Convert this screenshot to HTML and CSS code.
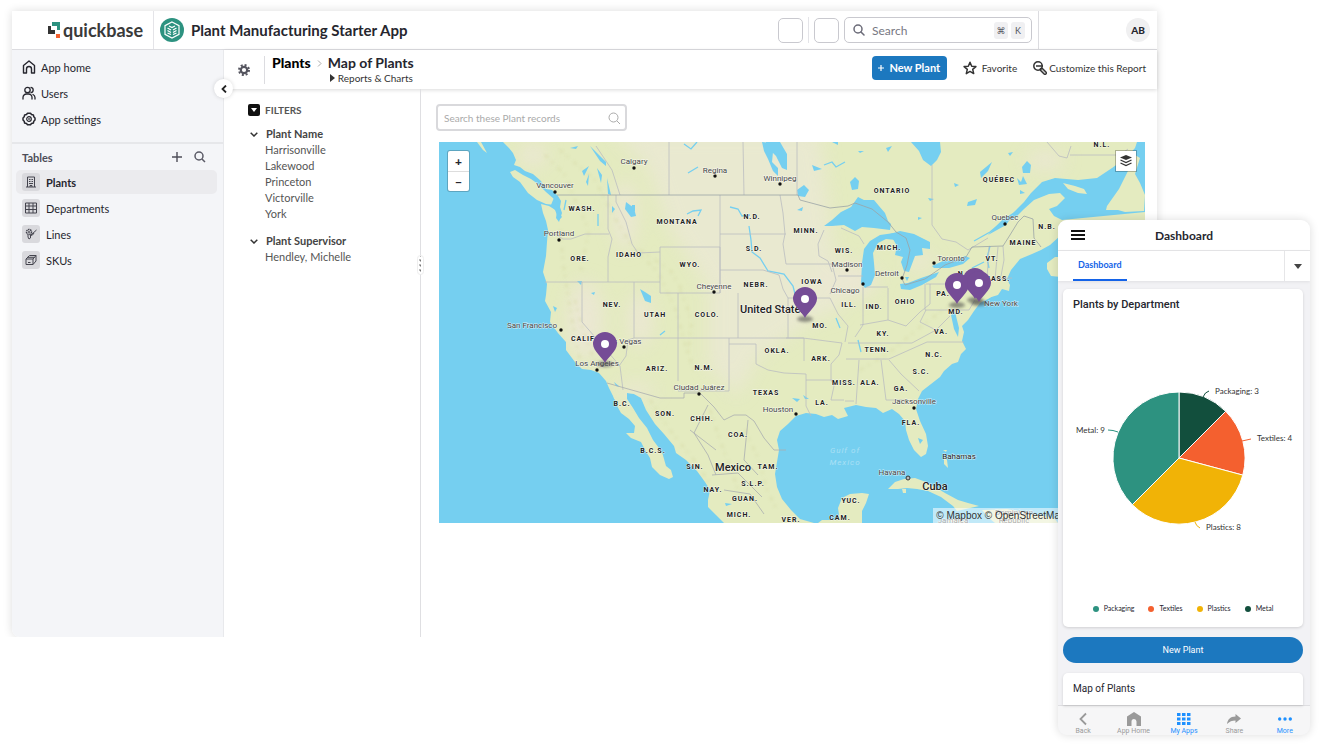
FILE: index.html
```html
<!DOCTYPE html>
<html lang="en">
<head>
    <meta charset="UTF-8">
    <meta name="viewport" content="width=device-width, initial-scale=1.0">
    <title>Plant Manufacturing Starter App</title>
    <link rel="stylesheet" href="styles.css">
</head>
<body>
    <div class="app">
        <!-- Top bar -->
        <header class="topbar">
            <div class="brand">
                <svg width="12" height="16" viewBox="0 0 12 16">
                    <path fill="#2d9280" d="M4 0h8v8H9V4H4z"/>
                    <path fill="#333" d="M0 4h3v4h4v4H0z"/>
                    <path fill="#f4602f" d="M8 12h4v4H8z"/>
                </svg>
                <span>quickbase</span>
            </div>
            <div class="app-name">
                <svg width="24" height="24" viewBox="0 0 24 24" fill="none" stroke="#fff">
                    <circle cx="12" cy="12" r="12" fill="#2d9280" stroke="none"/>
                    <path d="M12 4l7 3.700v8.600L12 20l-7-3.700V7.700z" stroke-width="1.200"/>
                    <path d="M7.500 10l3.500 2M7.500 12.500l3.500 2M7.500 15l3.500 1.500M16.500 10L13 12M16.500 12.500l-3.500 2M16.500 15L13 16.500M9 8l3 1.500L15 8" stroke-width="1.300"/>
                </svg>
                <h1>Plant Manufacturing Starter App</h1>
            </div>
            <div class="top-tools">
                <button class="square" aria-label="Add"></button>
                <span class="tool-line"></span>
                <button class="square" aria-label="Help"></button>
                <div class="search">
                    <svg width="12" height="12" viewBox="0 0 12 12" fill="none" stroke="#6b6b78" stroke-width="1.500" stroke-linecap="round"><circle cx="5" cy="5" r="4"/><path d="M8 8l3 3"/></svg>
                    <input type="text" placeholder="Search" aria-label="Search">
                    <kbd>⌘</kbd><kbd>K</kbd>
                </div>
            </div>
            <div class="account"><button class="avatar">AB</button></div>
        </header>

        <div class="columns">
            <!-- Sidebar -->
            <aside class="sidebar">
                <nav class="main-nav">
                    <a href="#"><svg width="14" height="14" viewBox="0 0 14 14" fill="none" stroke="#26262e" stroke-width="1.400" stroke-linejoin="round"><path d="M1.500 5.500L7 1l5.500 4.500V13H9.500V9a2.500 2.500 0 0 0-5 0v4h-3z"/></svg>App home</a>
                    <a href="#"><svg width="14" height="14" viewBox="0 0 14 14" fill="none" stroke="#26262e" stroke-width="1.300" stroke-linecap="round"><circle cx="5.500" cy="4" r="2.700"/><path d="M1 13v-1.500A3.500 3.500 0 0 1 4.500 8h2A3.500 3.500 0 0 1 10 11.500V13M9 1.300a2.700 2.700 0 0 1 0 5.300M11 8.500a3.500 3.500 0 0 1 2 3V13"/></svg>Users</a>
                    <a href="#"><svg width="14" height="14" viewBox="0 0 14 14" fill="none" stroke="#26262e" stroke-linejoin="round"><path d="M5.500 1.200h3l1 1.300 1.900.4.400 1.900 1.200 1.200v2l-1.200 1.200-.4 1.900-1.900.4-1 1.300h-3l-1-1.300-1.900-.4-.4-1.900L1 8V6l1.200-1.200.4-1.900 1.900-.4z" stroke-width="1.500"/><circle cx="7" cy="7" r="2.300" stroke-width="1.200"/><circle cx="7" cy="7" r=".5"/></svg>App settings</a>
                </nav>
                <div class="tables-head">
                    <h2>Tables</h2>
                    <button aria-label="Add table"><svg width="10" height="10" viewBox="0 0 10 10" stroke="#4d4d58" stroke-width="1.400"><path d="M5 0v10M0 5h10"/></svg></button>
                    <button aria-label="Find table"><svg width="12" height="12" viewBox="0 0 12 12" fill="none" stroke="#5a5a66" stroke-width="1.500"><circle cx="5" cy="5" r="4"/><path d="M8 8l3 3"/></svg></button>
                </div>
                <nav class="table-nav">
                    <a href="#" class="active"><i><svg width="12" height="12" viewBox="0 0 12 12" fill="none" stroke="#44444e"><path d="M2.500 11V1h7v10M1 11h10M4 3.500h1.500M6.500 3.500H8M4 5.500h1.500M6.500 5.500H8M4 7.500h4M5 11V9.500h2V11"/></svg></i>Plants</a>
                    <a href="#"><i><svg width="12" height="12" viewBox="0 0 12 12" fill="none" stroke="#44444e"><path d="M.5 1h11v10H.5zM.5 4h11M.5 7.500h11M4 1v10M8 1v10"/></svg></i>Departments</a>
                    <a href="#"><i><svg width="12" height="12" viewBox="0 0 12 12" fill="none" stroke="#44444e"><circle cx="4" cy="4" r="2.500" stroke-width="1.500" stroke-dasharray="1.500 .6"/><circle cx="4" cy="4" r=".6"/><path d="M3 7v2l1 2 1.500-1V7M6 7l5.500-5M5.500 7.500l2-.5L9 5"/></svg></i>Lines</a>
                    <a href="#"><i><svg width="12" height="12" viewBox="0 0 12 12" fill="none" stroke="#44444e" stroke-linejoin="round"><path d="M1 5l3.500-3.500H11L8 5zM1 5v5.500h7V5M8 10.500L11 7V1.500M2.500 3.300h7M3 8.500h2.500"/></svg></i>SKUs</a>
                </nav>
                <button class="collapse" aria-label="Collapse sidebar"><svg width="6" height="8" viewBox="0 0 6 8" fill="none" stroke="#222" stroke-width="1.800"><path d="M5 .5L1.500 4 5 7.500"/></svg></button>
            </aside>

            <div class="content">
                <!-- Report header -->
                <div class="report-head">
                    <button class="gear" aria-label="Report settings"><svg width="12" height="12" viewBox="0 0 12 12" fill="none" stroke="#55555f"><circle cx="6" cy="6" r="3.200" stroke-width="2.200"/><circle cx="6" cy="6" r="5" stroke-width="2" stroke-dasharray="2 1.927"/></svg></button>
                    <div class="crumbs">
                        <a href="#" class="crumb-root">Plants</a>
                        <svg width="5" height="7" viewBox="0 0 5 7" fill="none" stroke="#aaa"><path d="M1 .5l3 3-3 3"/></svg>
                        <div>
                            <h2>Map of Plants</h2>
                            <a href="#" class="reports"><svg width="5" height="8" viewBox="0 0 5 8"><path fill="#333" d="M0 0l5 4-5 4z"/></svg>Reports &amp; Charts</a>
                        </div>
                    </div>
                    <div class="actions">
                        <button class="new-plant"><svg width="6" height="6" viewBox="0 0 6 6" stroke="#fff" stroke-width="1.200"><path d="M3 0v6M0 3h6"/></svg>New Plant</button>
                        <a href="#" class="favorite"><svg width="14" height="14" viewBox="0 0 14 14" fill="none" stroke="#333" stroke-width="1.500" stroke-linejoin="round"><path d="M7 1.300l1.700 3.900 4.200.4-3.200 2.800 1 4.200L7 10.400l-3.700 2.200 1-4.200L1.100 5.600l4.200-.4z"/></svg>Favorite</a>
                        <a href="#" class="customize"><svg width="14" height="14" viewBox="0 0 14 14" fill="none" stroke="#333"><circle cx="5" cy="5" r="4.200" stroke-width="1.500"/><path d="M3 5h7" stroke-width="1.500"/><path d="M8.500 8.500l3.500 3.500" stroke-width="4" stroke-linecap="round"/><path d="M9 9l3 3" stroke="#ccc" stroke-width="1.300" stroke-linecap="round"/></svg>Customize this Report</a>
                    </div>
                </div>

                <div class="report-body">
                    <!-- Filters -->
                    <section class="filters">
                        <h3 class="filters-title"><svg width="12" height="12" viewBox="0 0 12 12"><rect width="12" height="12" rx="2" fill="#111"/><path fill="#fff" d="M3 4h6L6 8z"/></svg>FILTERS</h3>
                        <div class="filter-group">
                            <h4><svg width="8" height="5" viewBox="0 0 8 5" fill="none" stroke="#333" stroke-width="1.500"><path d="M.7.700L4 4 7.300.700"/></svg>Plant Name</h4>
                            <a href="#">Harrisonville</a>
                            <a href="#">Lakewood</a>
                            <a href="#">Princeton</a>
                            <a href="#">Victorville</a>
                            <a href="#">York</a>
                        </div>
                        <div class="filter-group">
                            <h4><svg width="8" height="5" viewBox="0 0 8 5" fill="none" stroke="#333" stroke-width="1.500"><path d="M.7.700L4 4 7.300.700"/></svg>Plant Supervisor</h4>
                            <a href="#">Hendley, Michelle</a>
                        </div>
                        <span class="grip"></span>
                    </section>

                    <main class="report">
                        <div class="record-search">
                            <input type="text" placeholder="Search these Plant records" aria-label="Search these Plant records">
                            <svg width="12" height="12" viewBox="0 0 12 12" fill="none" stroke="#aaa"><circle cx="5.500" cy="5.500" r="4.500"/><path d="M9 9l3 3"/></svg>
                        </div>
                        <div class="map">
                            <svg class="map-canvas" viewBox="439 142 706 381">
                                <defs>
                                    <filter id="soft" x="-50%" y="-50%" width="200%" height="200%"><feGaussianBlur stdDeviation="9"/></filter>
                                    <filter id="shade" x="-50%" y="-50%" width="200%" height="200%"><feGaussianBlur stdDeviation="1.500"/></filter>
                                    <g id="pin">
                                        <ellipse cy="1" rx="8" ry="3" fill="#444" opacity=".55" filter="url(#shade)"/>
                                        <path fill="#754c96" d="M0 0C-2-5-12-12-12-19a12 12 0 0 1 24 0C12-12 2-5 0 0z"/>
                                        <circle cy="-19" r="4" fill="#fff"/>
                                    </g>
                                    <path id="mainland" d="M503 142L509 148 513 153 516 160 514 165 520 167 525 171 533 174 541 181 546 189 552 190 558 196 561 201 560 207 562 213 559 222 556 218 557 211 549 206 541 204 543 213 546 221 548 230 547 242 546 256 543 272 547 284 546 295 545 301 551 312 550 322 558 333 566 342 566 350 575 362 582 369 591 370 599 373 606 381 609 388 613 396 616 404 621 413 629 419 635 426 634 433 626 433 631 438 641 442 645 450 650 458 652 467 660 475 669 479 673 477 671 470 666 466 662 452 653 440 647 428 639 418 633 408 627 399 627 393 634 394 641 398 646 410 655 424 664 434 674 446 676 453 686 460 697 471 705 482 710 490 708 500 708 507 716 515 724 523L814 523 800 519 791 510 782 499 777 487 775 474 777 462 779 450 777 440 780 431 788 424 796 416 806 413 816 414 824 417 832 415 838 419 848 416 844 408 856 405 866 407 876 408 883 413 892 409 899 414 905 421 906 430 909 440 914 450 921 457 926 454 928 446 926 434 920 421 916 409 918 399 922 391 931 384 940 377 944 371 952 364 958 362 961 354 966 349 962 341 964 332 962 326 968 320 974 311 980 303 988 298 998 295 1002 289 1009 291 1010 285 1007 279 1011 270 1020 259 1032 254 1041 250 1050 245 1060 236 1070 232 1145 226 1145 212 1062 220 1054 216 1049 209 1057 206 1065 198 1060 193 1049 194 1034 200 1024 209 1015 218 1005 222 1015 211 1024 202 1031 193 1042 182 1055 178 1078 180 1097 178 1112 168 1126 158 1135 148 1137 142z"/>
                                    <path id="superior" d="M824 226l8-6 9-8 10-5 7-10 6 3 10 0 5 6 6 7 3 8 3 3-1 6-16-2-12-1-7 4-11-6-12 1z"/>
                                    <clipPath id="land-clip"><use href="#mainland"/></clipPath>
                                </defs>
                                <rect x="439" y="142" width="706" height="381" fill="#75cff0"/>
                                <!-- Land -->
                                <g fill="#e4ebc0">
                                    <use href="#mainland"/>
                                    <path d="M477 142h4l6 11-4-3zM510 172l5-2 8 5 8 4 7 5 8 8 8 7 1 6-9-1-9-4-9-7-8-11-7-5zM1063 183l12 3 9 3 3 5-9-1-10-4zM1145 195l-5-12-5-9 5-16-5-3-8 18-8 16-12 17-1 4 12 0 7 2 19-1zM1047 263l8-6 6 0v20l-10-1-4-7z"/>
                                    <path d="M976 302l10-5 10-3-8 5-9 4zM888 489l7-7 9-3 11-1 11 4 9 5 10 6 13 7 10 3 11 3-22 5-4-5-12-9-13-6-11-2-10-1-9 1zM818 523l4-3 15 0 2-5-1-7 4-10 8-4 12-1 7 1-3 9-4 8 0 12zM944 456l3 4 1 8-4-4zM943 450l4 0-1 2zM902 489l4 0 0 4-3 0zM945 522l8-3 14 3 1 1zM995 523l-5-4-8-9 25-1 27 5 20 4 4 5z"/>
                                </g>
                                <!-- Drier and higher ground -->
                                <g clip-path="url(#land-clip)">
                                    <g filter="url(#soft)" fill="#ede6d9" opacity=".75">
                                        <path d="M610 132h210l12 100 8 80-22 5-60 40-20 40-30-30 0-80-40-60-20-60z" fill="#ebe8d6"/>
                                        <ellipse cx="533" cy="155" rx="14" ry="12"/>
                                        <ellipse cx="625" cy="215" rx="12" ry="35"/>
                                        <ellipse cx="585" cy="320" rx="18" ry="40"/>
                                        <ellipse cx="640" cy="320" rx="12" ry="28"/>
                                        <ellipse cx="636" cy="390" rx="20" ry="7"/>
                                        <ellipse cx="848" cy="280" rx="30" ry="18"/>
                                        <ellipse cx="1045" cy="160" rx="20" ry="9"/>
                                        <ellipse cx="920" cy="262" rx="14" ry="8"/>
                                    </g>
                                    <g fill="none" stroke="#d3d6a0" stroke-width="2" stroke-dasharray="4 5 2 7" opacity=".55" filter="url(#shade)">
                                        <path d="M545 155l20 20 12 30 12 25-8 40M560 150l35 30 20 38 18 30 25 24 18 38 12 45M575 300l8 30 15 40M560 230l4 40 8 50 8 40M680 290l12 30-4 34 8 20M640 250l30 20 12 20M650 400l20 30 24 30 16 24M745 430l14 30 8 30 10 20M710 410l10 30 22 60M860 370l30-18 24-20 34-26"/>
                                    </g>
                                </g>
                                <!-- Lakes and rivers -->
                                <g fill="#75cff0">
                                    <use href="#superior"/>
                                    <path d="M861 283l1-20 2-14 6-8 10-6 14-2 8 3-6 4-10-1-8 4-5 10 1 10 1 12-4 10-6 3z"/>
                                    <path d="M890 234l10-3 14 3 10 5 6 3 0 7-8-1 1 7-8 1-3 8-3 8-5-1-3-9 2-5-8-2 2-9z"/>
                                    <path d="M900 284l8-1 13-5 12-4 6-2-3 5-14 8-12 5-9-1zM932 266l11-5 14-1 8-4 5 2-7 6-14 4-15 0zM905 277l4 0-2 4zM911 142l8 9 4 9 8 6 6-6 4-8-1-10z"/>
                                    <path d="M762 142l8 1 3 9-1 10 6 6 0 8-5-5-5-12-4-8zM766 142h14l7 12 0 16-5-2-6-12-8-8zM797 190l7-5 5 5-4 7-7-1zM850 182l5-5 4 4-1 8-6 1zM797 210l6-3-1 4zM1022 167l5-6 4 4-1 8-7 0zM980 172l12-10-4 9-7 7zM1017 178l4 4 2-6 4 8-8 1zM968 202l9-3-2 6-8 1zM1002 220l14-9-10 14-18 10zM812 165l10 4-8 2zM832 142h6v3z"/>
                                    <path d="M626 202l8 6 2 8-5 1-6-8zM640 289l5 3 6 4 0 7-6-2zM612 206l3 3-3 4zM632 205l3 0v6h-4zM577 281l5 0-1 4zM591 293l4-1-1 3zM553 306l4 2-2 4zM555 195l5 8-2 8 4 6-3 3-4-10-4-5zM613 398l4 4-3 0zM614 382l6 5-4-1zM792 398l8 1-3 3zM803 395l6 4-4 0zM918 438l5 2-3 4zM725 503l7 1-6 2zM951 315l4-3 4 16-1 9-4-8z"/>
                                    <path d="M590 146l16 16 0 4-6-5zM582 171l7-5-5 10zM586 182l3-8-1 12zM597 168l5 7-1 8zM607 178l4 17-3-1zM570 148l8-2-2 3zM954 183l5 2-4 2zM928 198l6 1-4 2zM1020 190l5 3-5 1zM918 217l4 1-4 2zM1008 153l5-1-3 4zM858 151l6 0-4 2zM892 146l-4 6-2-4z"/>
                                </g>
                                <g fill="none" stroke="#75cff0">
                                    <path d="M730 207l8 2 4 7 8-1M749 226l2 14 1 12 8 6 8 13 16 3 9 12 3 12M687 214l6-3 8-1-3 6M688 173l5-3 5-3M684 144l7 5 6-7M598 214l0 12M566 200l-2 10M824 165l8-3 4 5 9-5M972 268l12-6M990 246l-3 12 2 10M1002 222l-12 10-16 9M836 318l4 10M858 340l3 12M660 335l5-4" stroke-width="1.300"/>
                                </g>
                                <!-- Borders -->
                                <g fill="none" stroke="#babdc0" stroke-width=".8">
                                    <path d="M616 195v7l10 20 6 22 6 9 22-1M608 195v34l4 10-4 18v25M555 234l8 5 8 0 14-5 24 0M545 282h115M660 247h60v46h-60zM582 282v40l38 44 3 24M634 282v56l-6 2-2 16-7 10M634 338h104M678 293v88M738 293v45M720 195v98M720 234h66M720 270h43l16 5 4 14 5 9v40M780 195l3 18 2 21-2 10 3 20 16 0h30l4 16-6 14M788 298h42l8 16 10 12-3 16M738 338h66v23M729 338v53H678M756 344v20l12 6 16 3 22 1v32l5 10M729 344h27M786 338h17l39 5M806 380h27M842 343l-3 12-8 9 0 16 3 6-3 14 13 0M848 343h64l24-13M846 359h43l38-17h37M859 360l-3 44M881 360l5 40h22M845 401h9M889 360l12 14 18 17M838 276h25M863 287v38l-8 12M888 288v32l18 6 14-14 10-8 0-20M866 287h22M860 325l28-5M824 230l-6 14 1 12 9 5 4 11M841 228l18 8 5 8M925 284v26h44l6-10M926 310l-6 12 16 8 14-14M926 284h35M1003 246l1 14-3 16M989 247l-2 32M994 279l18-1M998 247l-3 32M669 142v53M743 142l1 53M797 142v53M932 165v60l10 14 14 3 12 8 20-12M1047 142l12 14 8 2 4-12M1070 155h50l8-6M596 146l16 24 8 25"/>
                                    <path d="M607 383l53 15h24v-5h16l14 14 10 13 10-5 12 0 8 6 10 17 10 12 12 0M708 405l-14 28 14 22 8 20M748 420l-4 40 14 15M690 430l26 20M712 475l26-2 24 24M724 490l26 4 14 20" stroke="#a9adb0"/>
                                    <path d="M557 195H798L800 200 815 204 830 208 848 206 855 203 872 209 888 222 896 232 906 238 910 250 907 265 902 279 905 285 925 279 938 270 945 265 966 257 972 247 1003 246 1010 235 1018 222 1024 216 1033 219 1034 238 1041 247" stroke="#9aa3a6"/>
                                </g>
                                <!-- City dots -->
                                <g fill="#111">
                                    <circle cx="555" cy="192" r="1.700"/><circle cx="634" cy="168" r="1.700"/><circle cx="559" cy="240" r="1.700"/><circle cx="715" cy="176" r="1.700"/><circle cx="780" cy="184" r="1.700"/><circle cx="714" cy="292" r="1.700"/><circle cx="847" cy="270" r="1.700"/><circle cx="863" cy="284" r="1.700"/><circle cx="902" cy="278" r="1.700"/><circle cx="934" cy="263" r="1.700"/><circle cx="1005" cy="224" r="1.700"/><circle cx="561" cy="330" r="1.700"/><circle cx="624" cy="347" r="1.700"/><circle cx="597" cy="370" r="1.700"/><circle cx="699" cy="394" r="1.700"/><circle cx="796" cy="414" r="1.700"/><circle cx="914" cy="408" r="1.700"/><circle cx="908" cy="478" r="2" fill="#bbb" stroke="#333"/>
                                </g>
                                <g class="city">
                                    <text x="555" y="188">Vancouver</text><text x="634" y="164">Calgary</text><text x="559" y="236">Portland</text><text x="715" y="173">Regina</text><text x="780" y="181">Winnipeg</text><text x="714" y="289">Cheyenne</text><text x="847" y="267">Madison</text><text x="845" y="293">Chicago</text><text x="887" y="276">Detroit</text><text x="951" y="261">Toronto</text><text x="1005" y="220">Quebec</text><text x="532" y="328">San Francisco</text><text x="623" y="344">Las Vegas</text><text x="597" y="366">Los Angeles</text><text x="699" y="390">Ciudad Juárez</text><text x="778" y="412">Houston</text><text x="914" y="404">Jacksonville</text><text x="892" y="475">Havana</text><text x="1001" y="306">New York</text><text x="959" y="459" class="dark">Bahamas</text><text x="1014" y="515">Dominican</text><text x="1014" y="523">Republic</text><text x="953" y="523">Jamaica</text>
                                </g>
                                <g class="state">
                                    <text x="582" y="211">WASH.</text><text x="677" y="224">MONTANA</text><text x="752" y="219">N.D.</text><text x="806" y="233">MINN.</text><text x="892" y="193">ONTARIO</text><text x="999" y="182">QUÉBEC</text><text x="1102" y="147">N.L.</text><text x="1047" y="229">N.B.</text><text x="1023" y="245">MAINE</text><text x="580" y="261">ORE.</text><text x="629" y="257">IDAHO</text><text x="690" y="267">WYO.</text><text x="754" y="251">S.D.</text><text x="844" y="253">WIS.</text><text x="889" y="250">MICH.</text><text x="992" y="261">VT.</text><text x="612" y="307">NEV.</text><text x="655" y="317">UTAH</text><text x="707" y="317">COLO.</text><text x="756" y="287">NEBR.</text><text x="812" y="284">IOWA</text><text x="849" y="307">ILL.</text><text x="874" y="309">IND.</text><text x="905" y="304">OHIO</text><text x="943" y="296">PA.</text><text x="966" y="276">N.Y.</text><text x="997" y="281">MASS.</text><text x="956" y="314">MD.</text><text x="584" y="341">CALIF.</text><text x="657" y="371">ARIZ.</text><text x="704" y="370">N.M.</text><text x="777" y="353">OKLA.</text><text x="820" y="328">MO.</text><text x="821" y="361">ARK.</text><text x="883" y="336">KY.</text><text x="877" y="352">TENN.</text><text x="941" y="334">VA.</text><text x="934" y="357">N.C.</text><text x="921" y="374">S.C.</text><text x="901" y="391">GA.</text><text x="844" y="385">MISS.</text><text x="870" y="385">ALA.</text><text x="766" y="395">TEXAS</text><text x="822" y="405">LA.</text><text x="911" y="425">FLA.</text><text x="622" y="406">B.C.</text><text x="665" y="416">SON.</text><text x="702" y="421">CHIH.</text><text x="738" y="437">COA.</text><text x="653" y="453">B.C.S.</text><text x="695" y="469">SIN.</text><text x="768" y="469">TAM.</text><text x="753" y="486">S.L.P.</text><text x="713" y="492">NAY.</text><text x="745" y="501">GUAN.</text><text x="739" y="517">MICH.</text><text x="791" y="522">VER.</text><text x="851" y="503">YUC.</text><text x="840" y="520">CAM.</text>
                                </g>
                                <g class="country"><text x="773" y="313">United States</text><text x="733" y="471">Mexico</text><text x="935" y="490">Cuba</text></g>
                                <g class="sea"><text x="845" y="453">Gulf of</text><text x="845" y="465">Mexico</text></g>
                                <use href="#pin" x="605" y="363"/>
                                <use href="#pin" x="805" y="318"/>
                                <use href="#pin" x="975" y="299"/>
                                <use href="#pin" x="957" y="304"/>
                                <use href="#pin" x="979" y="302"/>
                            </svg>
                            <div class="zoom">
                                <button aria-label="Zoom in">+</button>
                                <button aria-label="Zoom out">−</button>
                            </div>
                            <button class="layers" aria-label="Map layers"><svg width="12" height="12" viewBox="0 0 12 12" fill="none" stroke="#333"><path fill="#333" stroke="none" d="M6 0l6 2.500L6 5 0 2.500z"/><path d="M.5 5L6 7.500 11.500 5M.5 8L6 10.500 11.500 8" stroke-width="1.300"/></svg></button>
                            <div class="credits">© Mapbox © OpenStreetMap Improve this map</div>
                        </div>
                    </main>
                </div>
            </div>
        </div>
    </div>

    <!-- Phone view -->
    <div class="phone">
        <header class="phone-head">
            <button aria-label="Menu"><svg width="14" height="10" viewBox="0 0 14 10" stroke="#111" stroke-width="2"><path d="M0 1h14M0 5h14M0 9h14"/></svg></button>
            <h2>Dashboard</h2>
        </header>
        <div class="phone-tabs">
            <a href="#">Dashboard</a>
            <button aria-label="More dashboards"><svg width="8" height="5" viewBox="0 0 8 5"><path fill="#444" d="M0 0h8L4 5z"/></svg></button>
        </div>
        <div class="phone-body">
            <section class="card chart-card">
                <h3>Plants by Department</h3>
                <svg class="pie" viewBox="1063 383 240 156">
                    <g stroke="#fff" stroke-width="1">
                        <path fill="#124f3d" d="M1179 458V392a66 66 0 0 1 46.700 19.300z"/>
                        <path fill="#f4602f" d="M1179 458l46.700-46.700a66 66 0 0 1 17.100 63.800z"/>
                        <path fill="#f1b306" d="M1179 458l63.800 17.100a66 66 0 0 1-110.500 29.600z"/>
                        <path fill="#2d9280" d="M1179 458l-46.700 46.700A66 66 0 0 1 1179 392z"/>
                    </g>
                    <g fill="none">
                        <path stroke="#124f3d" d="M1203 397q2-5 6-6"/>
                        <path stroke="#f4602f" d="M1242 441l9-2"/>
                        <path stroke="#f1b306" d="M1195 522q1 4 5 6"/>
                        <path stroke="#2d9280" d="M1108 430q5 0 10 2"/>
                    </g>
                    <text x="1215" y="394">Packaging: 3</text>
                    <text x="1257" y="441">Textiles: 4</text>
                    <text x="1206" y="530">Plastics: 8</text>
                    <text x="1076" y="433">Metal: 9</text>
                </svg>
                <ul class="legend">
                    <li class="green">Packaging</li>
                    <li class="orange">Textiles</li>
                    <li class="yellow">Plastics</li>
                    <li class="dark">Metal</li>
                </ul>
            </section>
            <button class="wide-button">New Plant</button>
            <section class="card map-card"><h3>Map of Plants</h3></section>
        </div>
        <nav class="phone-nav">
            <a href="#"><svg width="14" height="14" viewBox="0 0 14 14" fill="none" stroke="#9a9a9a" stroke-width="1.800"><path d="M10 1.500L4.500 7l5.500 5.500"/></svg>Back</a>
            <a href="#"><svg width="14" height="14" viewBox="0 0 14 14" fill="#9a9a9a"><path d="M7 0l7 4.500V14H9.500V9.500a2.500 2.500 0 0 0-5 0V14H0V4.500z"/></svg>App Home</a>
            <a href="#" class="on"><svg width="14" height="14" viewBox="0 0 14 14" fill="#1e90ff"><path d="M0 1h3.500v3H0zM5 1h3.500v3H5zM10 1h3.500v3H10zM0 5.500h3.500v3H0zM5 5.500h3.500v3H5zM10 5.500h3.500v3H10zM0 10h3.500v3H0zM5 10h3.500v3H5zM10 10h3.500v3H10z"/></svg>My Apps</a>
            <a href="#"><svg width="14" height="14" viewBox="0 0 14 14" fill="#9a9a9a"><path d="M8.500 2L14 6.500 8.500 11V8.500C5 8.500 2.500 9.500 0 12c.5-4 3-7.500 8.500-7.500z"/></svg>Share</a>
            <a href="#" class="on"><svg width="14" height="14" viewBox="0 0 14 14" fill="#1e90ff"><circle cx="1.700" cy="7" r="1.700"/><circle cx="7" cy="7" r="1.700"/><circle cx="12.300" cy="7" r="1.700"/></svg>More</a>
        </nav>
    </div>
</body>
</html>
```
FILE: styles.css
```css
* {
    box-sizing: border-box;
}

body {
    margin: 0;
    padding: 11px 163px 0 12px;
    background-color: white;
    color: #26262e;
    font-family: Lato, "Open Sans", sans-serif;
    font-size: 11px;
}

h1, h2, h3, h4, ul {
    margin: 0;
    padding: 0;
}

a {
    color: inherit;
    text-decoration: none;
}

button {
    border: none;
    padding: 0;
    background: none;
    color: inherit;
    font-family: inherit;
    cursor: pointer;
    display: flex;
    align-items: center;
    justify-content: center;
}

input {
    border: none;
    outline: none;
    padding: 0;
    background: none;
    font-family: inherit;
    flex: 1;
    min-width: 0;
}

svg {
    flex: none;
}

.app {
    display: flex;
    flex-direction: column;
    min-height: calc(100vh - 119px);
    background-color: white;
    box-shadow: 0 0 10px rgba(0, 0, 0, 0.14);
    border-radius: 0 0 8px 8px;
}

/* Top bar */
.topbar {
    display: flex;
    height: 39px;
    border-bottom: 1px solid #dcdce0;
}

.brand {
    display: flex;
    align-items: center;
    gap: 3px;
    width: 142px;
    padding-left: 36px;
    border-right: 1px solid #e4e4e8;
    color: #3a3a3a;
    font-size: 18px;
    font-weight: bold;
}

.app-name {
    display: flex;
    align-items: center;
    gap: 7px;
    padding-left: 6px;
}

.app-name h1 {
    font-size: 15px;
    font-weight: bold;
}

.top-tools {
    display: flex;
    align-items: center;
    gap: 5px;
    margin-left: auto;
    padding-right: 6px;
}

.square {
    width: 25px;
    height: 25px;
    border: 1px solid #c9c9cf;
    border-radius: 5px;
}

.tool-line {
    width: 1px;
    height: 26px;
    background-color: #e4e4e8;
}

.search {
    display: flex;
    align-items: center;
    gap: 3px;
    width: 188px;
    height: 26px;
    padding: 0 6px 0 8px;
    border: 1px solid #c9c9cf;
    border-radius: 5px;
}

.search input {
    padding-left: 4px;
    font-size: 12px;
}

.search input::placeholder {
    color: #777782;
}

kbd {
    width: 14px;
    background-color: #f0f0f2;
    border-radius: 3px;
    color: #55555f;
    font-family: Lato, "DejaVu Sans", sans-serif;
    font-size: 9px;
    line-height: 17px;
    text-align: center;
}

.account {
    display: flex;
    align-items: center;
    justify-content: flex-end;
    width: 119px;
    padding-right: 7px;
    border-left: 1px solid #dcdce0;
}

.avatar {
    width: 24px;
    height: 24px;
    border-radius: 50%;
    background-color: #f0f0f1;
    font-size: 10px;
    font-weight: 900;
}

.columns {
    display: flex;
    flex: 1;
}

/* Sidebar */
.sidebar {
    position: relative;
    width: 212px;
    background-color: #f4f5f8;
    border-right: 1px solid #e8e9ec;
    border-radius: 0 0 0 8px;
    font-size: 11px;
}

.main-nav {
    padding: 4px 10px 10px;
    border-bottom: 2px solid #e6e7ea;
}

.main-nav a {
    display: flex;
    align-items: center;
    gap: 5px;
    height: 26px;
}

.tables-head {
    display: flex;
    align-items: center;
    gap: 12px;
    height: 26px;
    padding: 0 17px 0 10px;
    color: #4d4d58;
}

.tables-head h2 {
    flex: 1;
    font-size: 11px;
}

.table-nav {
    padding: 0 6px 0 4px;
}

.table-nav a {
    display: flex;
    align-items: center;
    gap: 6px;
    height: 24px;
    margin-bottom: 2px;
    padding-left: 6px;
    border-radius: 5px;
}

.table-nav .active {
    background-color: #ebebee;
    font-weight: bold;
}

.table-nav i {
    display: flex;
    align-items: center;
    justify-content: center;
    width: 18px;
    height: 18px;
    border-radius: 3px;
    background-color: #d9d9dd;
}

.collapse {
    position: absolute;
    top: 29px;
    right: -10px;
    z-index: 2;
    width: 19px;
    height: 19px;
    border-radius: 50%;
    background-color: white;
    box-shadow: 0 0 4px rgba(0, 0, 0, 0.15);
}

.content {
    display: flex;
    flex: 1;
    flex-direction: column;
    min-width: 0;
}

/* Report header */
.report-head {
    display: flex;
    align-items: center;
    height: 39px;
    padding: 0 11px 0 14px;
    box-shadow: 0 1px 4px rgba(0, 0, 0, 0.15);
}

.crumbs {
    display: flex;
    align-items: flex-start;
    gap: 6px;
    height: 28px;
    margin-left: 14px;
    padding-left: 7px;
    border-left: 1px solid #dcdce0;
    line-height: 14px;
}

.crumbs > svg {
    margin-top: 4px;
}

.crumb-root {
    color: black;
    font-size: 14px;
    font-weight: 900;
}

.crumbs h2 {
    font-size: 14px;
}

.reports {
    display: flex;
    align-items: center;
    gap: 3px;
    padding-left: 2px;
    color: #333;
    font-size: 10px;
    line-height: 16px;
}

.actions {
    display: flex;
    align-items: center;
    gap: 16px;
    margin-left: auto;
    padding-bottom: 4px;
    color: #333;
    font-size: 10px;
}

.new-plant {
    gap: 5px;
    width: 75px;
    height: 24px;
    border-radius: 4px;
    background-color: #1c78bf;
    color: white;
    font-size: 11px;
    font-weight: bold;
}

.favorite, .customize {
    display: flex;
    align-items: center;
    gap: 5px;
}

.customize {
    gap: 2px;
}

.report-body {
    display: flex;
    flex: 1;
}

/* Filters */
.filters {
    position: relative;
    width: 197px;
    padding: 13px 10px 0 24px;
    border-right: 1px solid #dfdfe2;
    color: #555;
}

.filters-title {
    display: flex;
    align-items: center;
    gap: 5px;
    height: 16px;
    margin-bottom: 8px;
    font-size: 10px;
}

.filter-group {
    display: flex;
    flex-direction: column;
    margin-bottom: 11px;
    line-height: 16px;
}

.filter-group h4 {
    display: flex;
    align-items: center;
    gap: 8px;
    padding-left: 2px;
    color: #444;
    font-size: 11px;
}

.filter-group a {
    padding-left: 17px;
}

.grip {
    position: absolute;
    top: 166px;
    right: -4px;
    width: 7px;
    height: 20px;
    border-radius: 4px;
    background: radial-gradient(circle, #777 1px, white 1px) center / 7px 5px;
    border: 1px solid #eee;
}

/* Report */
.report {
    flex: 1;
    min-width: 0;
    padding: 15px 12px 12px 15px;
}

.record-search {
    display: flex;
    align-items: center;
    width: 191px;
    height: 27px;
    margin-bottom: 11px;
    padding: 0 5px 0 6px;
    border: 2px solid #d9d9dc;
    border-radius: 4px;
}

.record-search input {
    font-size: 10px;
}

.record-search input::placeholder {
    color: #aaa;
}

.map {
    position: relative;
    margin-left: 3px;
}

.map-canvas {
    display: block;
    width: 100%;
}

.map-canvas text {
    font-family: Roboto, sans-serif;
    text-anchor: middle;
    paint-order: stroke;
    stroke: rgba(255, 255, 255, 0.7);
    stroke-width: 1px;
}

.city {
    font-size: 8px;
    fill: #444;
}

.city .dark {
    fill: #222;
}

.state {
    font-size: 7px;
    font-weight: bold;
    letter-spacing: 1px;
    fill: #222;
}

.country {
    font-size: 11px;
    font-weight: 500;
    fill: #222;
}

.map-canvas .sea text {
    stroke: none;
    fill: #a9e0f5;
    font-size: 8px;
    font-style: italic;
    letter-spacing: 1px;
}

.zoom {
    position: absolute;
    top: 9px;
    left: 9px;
    width: 21px;
    background-color: white;
    border-radius: 2px;
    box-shadow: 0 0 0 1px rgba(0, 0, 0, 0.2);
}

.zoom button {
    width: 100%;
    height: 20px;
    font-size: 12px;
    font-weight: 900;
}

.zoom button + button {
    border-top: 1px solid #ddd;
}

.layers {
    position: absolute;
    top: 9px;
    right: 9px;
    width: 20px;
    height: 20px;
    background-color: white;
    box-shadow: 0 0 0 1px rgba(0, 0, 0, 0.25);
}

.credits {
    position: absolute;
    right: 0;
    bottom: 0;
    padding-left: 3px;
    background-color: rgba(255, 255, 255, 0.55);
    color: #333;
    font-family: "Liberation Sans", Arial, sans-serif;
    font-size: 10px;
    line-height: 15px;
}

/* Phone */
.phone {
    position: absolute;
    top: 220px;
    right: 10px;
    z-index: 5;
    width: 252px;
    overflow: hidden;
    border-radius: 9px;
    background-color: #f2f2f5;
    box-shadow: 0 0 10px rgba(0, 0, 0, 0.14);
}

.phone-head {
    display: grid;
    grid-template-columns: 14px 1fr 14px;
    align-items: center;
    height: 31px;
    padding: 0 13px;
    background-color: white;
    border-bottom: 1px solid #e6e6e8;
    text-align: center;
}

.phone-head h2 {
    font-size: 12px;
}

.phone-tabs {
    display: flex;
    justify-content: space-between;
    height: 30px;
    padding-left: 15px;
    background-color: white;
    box-shadow: 0 1px 3px rgba(0, 0, 0, 0.08);
}

.phone-tabs a {
    border-bottom: 2px solid #1463e8;
    padding: 0 5px;
    color: #1463e8;
    font-size: 9px;
    font-weight: bold;
    line-height: 28px;
}

.phone-tabs button {
    width: 26px;
    border-left: 1px solid #e6e6e8;
}

.phone-body {
    display: flex;
    flex-direction: column;
    gap: 10px;
    padding: 8px 7px 0 5px;
}

.card {
    border-radius: 5px;
    background-color: white;
    box-shadow: 0 1px 3px rgba(0, 0, 0, 0.15);
}

.card h3 {
    padding: 0 10px;
    font-family: Roboto, sans-serif;
    font-size: 11px;
    font-weight: 500;
    line-height: 32px;
}

.chart-card {
    padding-bottom: 11px;
}

.pie {
    display: block;
    width: 100%;
    margin: 62px 0;
}

.pie text {
    font-size: 8px;
    fill: #333;
}

.legend {
    display: flex;
    justify-content: center;
    gap: 14px;
    list-style: none;
    font-size: 7px;
    line-height: 15px;
}

.legend li {
    display: flex;
    align-items: center;
    gap: 5px;
}

.legend li::before {
    content: "";
    width: 6px;
    height: 6px;
    border-radius: 50%;
    background-color: #2d9280;
}

.legend .orange::before {
    background-color: #f4602f;
}

.legend .yellow::before {
    background-color: #f1b306;
}

.legend .dark::before {
    background-color: #124f3d;
}

.wide-button {
    height: 26px;
    border-radius: 13px;
    background-color: #1c78bf;
    color: white;
    font-family: Roboto, sans-serif;
    font-size: 9px;
}

.map-card {
    border-radius: 5px 5px 0 0;
}

.map-card h3 {
    font-family: Roboto, sans-serif;
    font-size: 10px;
    font-weight: normal;
}

.phone-nav {
    display: grid;
    grid-template-columns: repeat(5, 1fr);
    padding-top: 6px;
    background-color: #f6f6f7;
    border-top: 1px solid #dfdfe2;
}

.phone-nav a {
    display: flex;
    flex-direction: column;
    align-items: center;
    gap: 1px;
    color: #9a9a9a;
    font-family: Roboto, sans-serif;
    font-size: 7px;
    line-height: 8px;
}

.phone-nav .on {
    color: #1e90ff;
}
```
